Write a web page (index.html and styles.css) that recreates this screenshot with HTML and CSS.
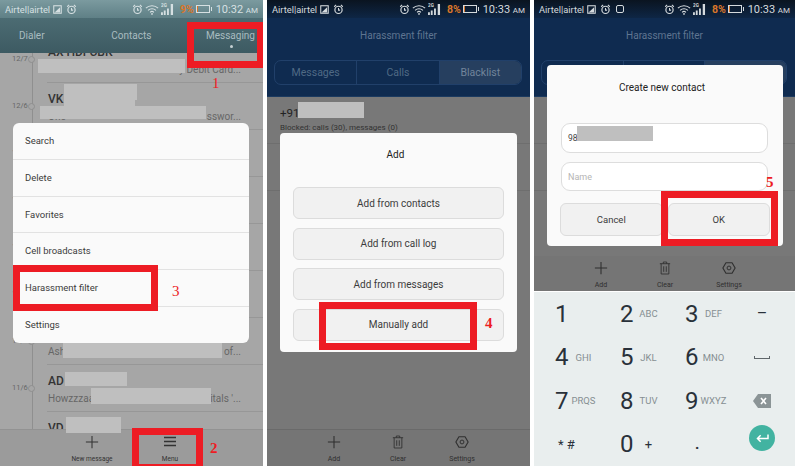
FILE: index.html
```html
<!DOCTYPE html>
<html lang="en">
<head>
    <meta charset="UTF-8">
    <meta name="viewport" content="width=device-width, initial-scale=1.0">
    <title>Harassment filter steps</title>
    <link rel="stylesheet" href="styles.css">
</head>
<body>
    <svg class="icon-defs" width="0" height="0">
        <symbol id="ic-alarm" viewBox="0 0 14 14"><circle cx="7" cy="7.5" r="4.6" fill="none" stroke="currentColor" stroke-width="1.5"/><path d="M1.5 3.5 4 1.2M12.5 3.5 10 1.2M7 5v2.8h2" fill="none" stroke="currentColor" stroke-width="1.3"/></symbol>
        <symbol id="ic-photo" viewBox="0 0 12 12"><rect x="1" y="1" width="10" height="10" fill="none" stroke="currentColor" stroke-width="1.4"/><path d="M2 10 9.5 3v7z" fill="currentColor"/></symbol>
        <symbol id="ic-wifi" viewBox="0 0 16 12"><path d="M1 4.500a10 10 0 0 1 14 0M3.500 7a6.500 6.500 0 0 1 9 0M5.800 9.200a3.200 3.200 0 0 1 4.400 0" fill="none" stroke="currentColor" stroke-width="1.200"/><circle cx="8" cy="11" r="1" fill="currentColor"/></symbol>
        <symbol id="ic-signal" viewBox="0 0 14 13"><text x="0" y="4.500" font-size="5" font-weight="700" fill="currentColor">2G</text><path d="M0 10h2v3H0zM3 8h2v5H3zM6.500 6h2v7h-2zM10.500 1h2.500v12h-2.500z" fill="currentColor"/></symbol>
        <symbol id="ic-plus" viewBox="0 0 16 16"><path d="M8 1v14M1 8h14" stroke="currentColor" stroke-width="1.200"/></symbol>
        <symbol id="ic-menu" viewBox="0 0 14 12"><path d="M1 2h12M1 6h12M1 10h12" stroke="currentColor" stroke-width="1.300"/></symbol>
        <symbol id="ic-trash" viewBox="0 0 14 16"><path d="M1 3h12M5 3V1h4v2M2.500 3v12h9V3M5.500 6v6.500M8.500 6v6.500" fill="none" stroke="currentColor" stroke-width="1"/></symbol>
        <symbol id="ic-gear" viewBox="0 0 16 16"><path d="M4.500 2h7L15 8l-3.500 6h-7L1 8z" fill="none" stroke="currentColor" stroke-width="1.300" stroke-linejoin="round"/><circle cx="8" cy="8" r="2.200" fill="none" stroke="currentColor" stroke-width="1.100"/></symbol>
    </svg>

    <div class="shots">
        <!-- first phone: messaging list with menu -->
        <section class="phone phone-teal">
            <div class="status status-teal">
                <span class="carrier">Airtel|airtel</span>
                <svg class="st-photo"><use href="#ic-photo"/></svg>
                <svg class="st-alarm"><use href="#ic-alarm"/></svg>
                <span class="grow"></span>
                <svg class="st-alarm"><use href="#ic-alarm"/></svg>
                <svg class="st-wifi"><use href="#ic-wifi"/></svg>
                <svg class="st-signal"><use href="#ic-signal"/></svg>
                <span class="pct">9%</span>
                <span class="batt"><i class="batt-low"></i></span>
                <span class="time">10:32 <small>AM</small></span>
            </div>
            <nav class="tabs">
                <span>Dialer</span>
                <span class="tab-mid">Contacts</span>
                <span class="tab-on">Messaging</span>
            </nav>
            <div class="list">
                <div class="timeline"></div>
                <div class="msg msg-first"><time>12/7</time><div class="msg-body"><b>AX HDFCBK</b><p><span>Your</span><span>y Debit Card...</span></p></div></div>
                <div class="msg"><time>12/6</time><div class="msg-body"><b>VK</b><p><span>One</span><span>sswor...</span></p></div></div>
                <!-- these rows sit behind the menu, only the first digit peeks out -->
                <div class="msg"><time>1</time><div class="msg-body"></div></div>
                <div class="msg"><time>1</time><div class="msg-body"></div></div>
                <div class="msg"><time>1</time><div class="msg-body"></div></div>
                <div class="msg"><time>1</time><div class="msg-body"></div></div>
                <div class="msg"><time>11/7</time><div class="msg-body"><b></b><p><span>Ash</span><span>s of...</span></p></div></div>
                <div class="msg"><time>11/6</time><div class="msg-body"><b>AD</b><p><span>Howzzzaa</span><span>itals '...</span></p></div></div>
                <div class="msg"><time>11/6</time><div class="msg-body"><b>VD</b></div></div>
            </div>
            <footer class="bar bar-light">
                <div class="bar-item bar-new"><svg class="bar-plus"><use href="#ic-plus"/></svg><span>New message</span></div>
                <div class="bar-item bar-menu"><svg class="bar-lines"><use href="#ic-menu"/></svg><span>Menu</span></div>
            </footer>

            <i class="blank bl-1"></i><i class="blank bl-2"></i><i class="blank bl-3"></i><i class="blank bl-4"></i>
            <i class="blank bl-5"></i><i class="blank bl-6"></i><i class="blank bl-7"></i><i class="blank bl-8"></i>

            <ul class="menu">
                <li>Search</li>
                <li>Delete</li>
                <li>Favorites</li>
                <li>Cell broadcasts</li>
                <li>Harassment filter</li>
                <li>Settings</li>
            </ul>
            <i class="mark mark-msg"></i><em class="num num-1">1</em>
            <i class="mark mark-menu"></i><em class="num num-2">2</em>
            <i class="mark mark-filter"></i><em class="num num-3">3</em>
        </section>

        <!-- second phone: blacklist with add dialog -->
        <section class="phone phone-navy">
            <div class="status">
                <span class="carrier">Airtel|airtel</span>
                <svg class="st-photo"><use href="#ic-photo"/></svg>
                <svg class="st-alarm"><use href="#ic-alarm"/></svg>
                <span class="grow"></span>
                <svg class="st-alarm"><use href="#ic-alarm"/></svg>
                <svg class="st-wifi"><use href="#ic-wifi"/></svg>
                <svg class="st-signal"><use href="#ic-signal"/></svg>
                <span class="pct">8%</span>
                <span class="batt"><i class="batt-low"></i></span>
                <span class="time">10:33 <small>AM</small></span>
            </div>
            <header class="title">
                <h1>Harassment filter</h1>
                <div class="segs"><span>Messages</span><span>Calls</span><span class="seg-on">Blacklist</span></div>
            </header>
            <div class="black-body">
                <div class="black-row">
                    <div class="number">+91</div>
                    <div class="blocked">Blocked: calls (30), messages (0)</div>
                </div>
                <div class="black-row"></div>
            </div>
            <footer class="bar bar-dark">
                <div class="bar-item"><svg class="bar-plus"><use href="#ic-plus"/></svg><span>Add</span></div>
                <div class="bar-item"><svg class="bar-trash"><use href="#ic-trash"/></svg><span>Clear</span></div>
                <div class="bar-item"><svg class="bar-gear"><use href="#ic-gear"/></svg><span>Settings</span></div>
            </footer>

            <i class="blank bl-9"></i>

            <div class="dialog dialog-add">
                <h2>Add</h2>
                <button>Add from contacts</button>
                <button>Add from call log</button>
                <button>Add from messages</button>
                <button>Manually add</button>
            </div>
            <i class="mark mark-manual"></i><em class="num num-4">4</em>
        </section>

        <!-- third phone: create contact with keypad -->
        <section class="phone phone-navy phone-last">
            <div class="status">
                <span class="carrier">Airtel|airtel</span>
                <svg class="st-photo"><use href="#ic-photo"/></svg>
                <svg class="st-alarm"><use href="#ic-alarm"/></svg>
                <span class="st-box"></span>
                <span class="grow"></span>
                <svg class="st-alarm"><use href="#ic-alarm"/></svg>
                <svg class="st-wifi"><use href="#ic-wifi"/></svg>
                <svg class="st-signal"><use href="#ic-signal"/></svg>
                <span class="pct">8%</span>
                <span class="batt"><i class="batt-low"></i></span>
                <span class="time">10:33 <small>AM</small></span>
            </div>
            <header class="title">
                <h1>Harassment filter</h1>
                <div class="segs"><span>Messages</span><span>Calls</span><span class="seg-on">Blacklist</span></div>
            </header>
            <div class="black-body">
                <div class="black-row"></div>
                <div class="black-row"></div>
            </div>
            <footer class="bar bar-dark bar-short">
                <div class="bar-item"><svg class="bar-plus"><use href="#ic-plus"/></svg><span>Add</span></div>
                <div class="bar-item"><svg class="bar-trash"><use href="#ic-trash"/></svg><span>Clear</span></div>
                <div class="bar-item"><svg class="bar-gear"><use href="#ic-gear"/></svg><span>Settings</span></div>
            </footer>
            <div class="keypad">
                <div class="key"><b>1</b></div>
                <div class="key"><b>2</b><span>ABC</span></div>
                <div class="key"><b>3</b><span>DEF</span></div>
                <div class="key key-sym">&#8211;</div>
                <div class="key"><b>4</b><span>GHI</span></div>
                <div class="key"><b>5</b><span>JKL</span></div>
                <div class="key"><b>6</b><span>MNO</span></div>
                <div class="key key-sym"><i class="space"></i></div>
                <div class="key"><b>7</b><span>PRQS</span></div>
                <div class="key"><b>8</b><span>TUV</span></div>
                <div class="key"><b>9</b><span>WXYZ</span></div>
                <div class="key key-sym">
                    <svg class="backspace" viewBox="0 0 18 14"><path d="M5 0h13v14H5L0 7z" fill="#8b9496"/><path d="M8 4l5 6M13 4l-5 6" stroke="#fff" stroke-width="1.600"/></svg>
                </div>
                <div class="key key-star">* #</div>
                <div class="key"><b>0</b><span class="plus">+</span></div>
                <div class="key key-dot">.</div>
                <div class="key key-sym">
                    <span class="enter"><svg viewBox="0 0 16 12"><path d="M14 1.500v4.500H2.500M6 2.500 2.500 6 6 9.500" fill="none" stroke="#fff" stroke-width="1.600"/></svg></span>
                </div>
            </div>

            <div class="dialog dialog-new">
                <h2>Create new contact</h2>
                <div class="field">98</div>
                <div class="field field-empty">Name</div>
                <div class="dialog-btns"><button>Cancel</button><button>OK</button></div>
            </div>
            <i class="blank bl-10"></i>
            <i class="mark mark-ok"></i><em class="num num-5">5</em>
        </section>
    </div>
</body>
</html>
```

FILE: styles.css
```css
* {
    box-sizing: border-box;
}

html, body {
    margin: 0;
    height: 466px;
    overflow: hidden;
    background-color: #fff;
    font-family: "Roboto", "Liberation Sans", sans-serif;
}

.icon-defs {
    position: absolute;
}

.shots {
    display: flex;
    gap: 4px;
    height: 466px;
}

.phone {
    position: relative;
    flex: 0 0 263px;
    display: flex;
    flex-direction: column;
    height: 466px;
    overflow: hidden;
}

.phone-last {
    flex-basis: 261px;
}

.phone-teal {
    background-color: #a6a6a6;
}

.phone-navy {
    background-color: #787878;
}

/* status bar */
.status {
    display: flex;
    align-items: center;
    gap: 2px;
    height: 18px;
    padding: 0 5px;
    font-size: 9.300px;
    color: #d5dadd;
    background: linear-gradient(#0a1420, #0e2645);
    flex: none;
}

.status-teal {
    color: #d6e0e2;
    background: linear-gradient(#7b9a9f, #5f8086);
}

.grow {
    flex: 1;
}

.st-photo {
    width: 9px;
    height: 9px;
    margin-left: 1px;
}

.st-alarm {
    width: 11px;
    height: 11px;
    margin-left: 2px;
}

.st-wifi {
    width: 14px;
    height: 11px;
}

.st-signal {
    width: 13px;
    height: 12px;
}

.st-box {
    width: 8px;
    height: 8px;
    margin-left: 3px;
    border: 1px solid currentColor;
    border-radius: 2px;
}

.pct {
    margin-left: 4px;
    font-size: 10.500px;
    font-weight: 700;
    color: #d9762a;
}

.batt {
    position: relative;
    display: block;
    width: 14px;
    height: 8px;
    margin-right: 1px;
    border: 1px solid currentColor;
}

.batt::after {
    content: "";
    position: absolute;
    right: -3px;
    top: 1px;
    width: 1px;
    height: 4px;
    background-color: currentColor;
}

.batt-low {
    display: block;
    width: 1px;
    height: 6px;
    background-color: #d9762a;
}

.time {
    margin-left: 3px;
    font-size: 11px;
    white-space: nowrap;
}

.time small {
    font-size: 8px;
}

/* first phone */
.tabs {
    display: flex;
    justify-content: space-between;
    flex: none;
    height: 35px;
    padding: 12px 8px 0 19px;
    font-size: 10px;
    color: #a9bcc0;
    background: linear-gradient(#4c6c73, #3d5a62);
}

.tab-mid {
    margin-left: 12px;
}

.tab-on {
    position: relative;
}

.tab-on::after {
    content: "";
    position: absolute;
    left: 24px;
    top: 15px;
    width: 3px;
    height: 3px;
    border-radius: 50%;
    background-color: #c5d0d3;
}

.list {
    position: relative;
    flex: 1;
    display: flex;
    flex-direction: column;
    gap: 9px;
    overflow: hidden;
}

.timeline {
    position: absolute;
    left: 32px;
    top: 0;
    bottom: 0;
    width: 1px;
    background-color: #8f8f8f;
}

.msg {
    display: grid;
    grid-template-columns: 47px 1fr;
    flex: none;
    height: 38px;
}

.msg-first {
    margin-top: -8px;
}

.msg time {
    display: flex;
    height: 18px;
    padding: 9px 0 0 12px;
    font-size: 7.500px;
    line-height: 9px;
    color: #666;
}

/* ring on the timeline */
.msg time::after {
    content: "";
    position: relative;
    flex: none;
    width: 5px;
    height: 5px;
    margin: 2px 12px 0 auto;
    border: 1px solid #8f8f8f;
    border-radius: 50%;
    background-color: #a6a6a6;
}

.msg-body {
    padding-left: 1px;
    border-bottom: 1px solid #979797;
}

.msg-body b {
    display: block;
    height: 14px;
    font-size: 12px;
    line-height: 14px;
    font-weight: 500;
    color: #333;
}

.msg-body p {
    display: flex;
    justify-content: space-between;
    margin: 5px 0 0;
    padding-right: 22px;
    font-size: 10px;
    line-height: 11px;
    color: #666;
}

.bar {
    display: flex;
    flex: none;
    height: 37px;
    border-top: 1px solid #6a6a6a;
}

.bar-light {
    font-size: 6.500px;
    background-color: #9b9b9b;
    color: #333;
    border-top-color: #929292;
}

.bar-dark {
    justify-content: flex-start;
    padding-left: 43px;
    gap: 16px;
    font-size: 7px;
    background-color: #757575;
    color: #2f2f2f;
}

.bar-short {
    height: 36px;
    border-top: 0;
    border-bottom: 1px solid #fff;
}

.bar-item {
    display: flex;
    flex-direction: column;
    align-items: center;
    gap: 6px;
    width: 48px;
    padding-top: 5px;
}

.bar-light .bar-new {
    width: 68px;
    margin-left: 58px;
}

.bar-plus {
    width: 14px;
    height: 14px;
}

.bar-lines {
    width: 14px;
    height: 13px;
    margin-bottom: 1px;
}

.bar-trash {
    width: 12px;
    height: 14px;
}

.bar-gear {
    width: 14px;
    height: 14px;
}

.bar-menu {
    margin-left: 20px;
}

/* second and third phone */
.title {
    flex: none;
    height: 79px;
    background-color: #0f2b50;
    border-bottom: 1px solid #1b3a60;
    color: #5f7590;
    text-align: center;
}

.title h1 {
    margin: 0;
    padding-top: 12px;
    font-size: 10px;
    line-height: 12px;
    font-weight: 400;
}

.segs {
    display: flex;
    margin: 18px 8px 0 7px;
    height: 25px;
    font-size: 10.500px;
    line-height: 23px;
    color: #4f6a85;
    border: 1px solid #21406a;
    border-radius: 7px;
    overflow: hidden;
}

.segs span {
    flex: 1;
    border-left: 1px solid #21406a;
}

.segs span:first-child {
    border-left: 0;
}

.segs .seg-on {
    background-color: #263f5f;
    color: #72859b;
}

.black-body {
    flex: 1;
}

.black-row {
    height: 47px;
    padding: 9px 13px 0;
    border-bottom: 1px solid #6e6e6e;
}

.number {
    font-size: 11.500px;
    line-height: 14px;
    color: #222;
}

.blocked {
    margin-top: 3px;
    font-size: 8px;
    line-height: 9px;
    color: #333;
}

/* overlays */
.menu {
    position: absolute;
    left: 13px;
    top: 123px;
    width: 236px;
    height: 220px;
    margin: 0;
    padding: 0;
    list-style: none;
    background-color: #fafafa;
    border-radius: 6px;
    overflow: hidden;
    font-size: 9.500px;
    color: #3c3c3c;
}

.menu li {
    height: 36.800px;
    padding-left: 12px;
    line-height: 36px;
    border-bottom: 1px solid #e2e2e2;
}

.menu li:last-child {
    border-bottom: 0;
}

.dialog {
    position: absolute;
    background-color: #fafafa;
    border-radius: 4px;
    text-align: center;
}

.dialog h2 {
    margin: 0;
    padding-right: 6px;
    font-size: 10px;
    line-height: 12px;
    font-weight: 400;
    color: #222;
}

.dialog button {
    display: block;
    font: inherit;
    color: #3c3c3c;
    background-color: #f1f1f1;
    border: 1px solid #dcdcdc;
    border-radius: 6px;
}

.dialog-add {
    left: 13px;
    top: 133px;
    width: 237px;
    height: 219px;
    padding-top: 16px;
    font-size: 10px;
}

.dialog-add h2 {
    margin-bottom: 26px;
}

.dialog-add button {
    width: 211px;
    height: 32px;
    margin: 0 auto 8.500px;
}

.dialog-new {
    left: 13px;
    top: 65px;
    width: 236px;
    height: 181px;
    padding-top: 17px;
}

.dialog-new h2 {
    margin-bottom: 29px;
}

.field {
    width: 207px;
    height: 29.500px;
    margin: 0 auto 9px 14px;
    padding-left: 6px;
    font-size: 8.500px;
    line-height: 29px;
    text-align: left;
    color: #444;
    background-color: #fff;
    border: 1px solid #ddd;
    border-radius: 9px;
}

.field-empty {
    font-size: 9px;
    color: #b5b5b5;
}

.dialog-btns {
    display: flex;
    gap: 5px;
    margin: 0 13px;
    padding-top: 3px;
    font-size: 9.500px;
}

.dialog-btns button {
    flex: 1;
    height: 33px;
}

.blank {
    position: absolute;
    background-color: #bfbfbf;
}

.bl-1 { left: 38px; top: 59px; width: 147px; height: 14px; }
.bl-2 { left: 64px; top: 84px; width: 73px; height: 16px; }
.bl-3 { left: 64px; top: 100px; width: 71px; height: 6px; }
.bl-4 { left: 40px; top: 106px; width: 166px; height: 13px; }
.bl-5 { left: 63px; top: 342px; width: 159px; height: 16px; }
.bl-6 { left: 65px; top: 372px; width: 62px; height: 14px; }
.bl-7 { left: 91px; top: 388px; width: 120px; height: 16px; }
.bl-8 { left: 66px; top: 417px; width: 55px; height: 16px; }
.bl-9 { left: 31px; top: 102px; width: 66px; height: 16px; }
.bl-10 { left: 43px; top: 126px; width: 76px; height: 15px; }

/* red annotations */
.mark {
    position: absolute;
    border: 7px solid #ed1c24;
}

.mark-msg { left: 187px; top: 22px; width: 77px; height: 46px; }
.mark-menu { left: 132px; top: 428px; width: 71px; height: 38px; border-bottom-width: 2px; }
.mark-filter { left: 13px; top: 265px; width: 145px; height: 46px; }
.mark-manual { left: 52px; top: 302px; width: 158px; height: 48px; }
.mark-ok { left: 127px; top: 191px; width: 117px; height: 55px; }

.num {
    position: absolute;
    font-family: "Liberation Serif", serif;
    font-size: 15px;
    line-height: 1;
    font-style: normal;
    font-weight: 700;
    color: #ed1c24;
}

.num-1 { left: 212px; top: 76px; font-weight: 400; }
.num-2 { left: 210px; top: 441px; }
.num-3 { left: 172px; top: 284px; font-weight: 400; }
.num-4 { left: 218px; top: 316px; }
.num-5 { left: 232px; top: 175px; }

/* keypad */
.keypad {
    display: grid;
    flex: none;
    grid-template-columns: 65px 65px 65px 1fr;
    grid-auto-rows: 43.500px;
    height: 174px;
    background-color: #e9eeee;
    color: #29313a;
}

.key {
    display: flex;
    align-items: center;
    padding-left: 21px;
    font-size: 9.500px;
    color: #868e92;
}

.key b {
    flex: none;
    width: 13.500px;
    font-size: 24px;
    font-weight: 400;
    color: #29313a;
}

.key span {
    flex: none;
    width: 30px;
    text-align: center;
}

.key-sym {
    justify-content: center;
    padding-left: 0;
    font-size: 16px;
    color: #29313a;
}

.key-star {
    padding-left: 24px;
    font-size: 13px;
    color: #29313a;
}

.key-dot {
    padding-left: 31px;
    font-size: 15px;
    font-weight: 700;
    color: #29313a;
}

.key .plus {
    font-size: 13px;
    color: #29313a;
}

.space {
    display: block;
    width: 16px;
    height: 3px;
    border: 1px solid #5f666a;
    border-top: 0;
}

.backspace {
    width: 18px;
    height: 14px;
}

.key .enter {
    display: flex;
    align-items: center;
    justify-content: center;
    width: 26px;
    height: 26px;
    margin-bottom: 12px;
    border-radius: 50%;
    background-color: #42b3a1;
}

.enter svg {
    width: 15px;
    height: 11px;
}
```
